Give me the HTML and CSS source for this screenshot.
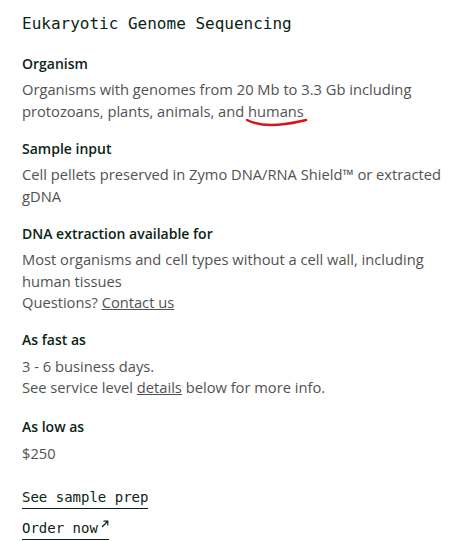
FILE: index.html
```html
<!DOCTYPE html>
<html>
<head>
<meta charset="utf-8">
<link rel="stylesheet" href="styles.css">
</head>
<body>
<div class="card">
  <h1 class="title">Eukaryotic Genome Sequencing</h1>
  <div class="section">
    <h2 class="label">Organism</h2>
    <p class="text">Organisms with genomes from 20 Mb to 3.3 Gb including protozoans, plants, animals, and <span class="mark">humans<svg class="scribble" width="64" height="12" viewBox="0 0 64 12"><path d="M2 3 C12 8 26 9 40 7 C50 6 56 4 61 3" fill="none" stroke="#d9141b" stroke-width="2.4" stroke-linecap="round"/></svg></span></p>
  </div>
  <div class="section">
    <h2 class="label">Sample input</h2>
    <p class="text">Cell pellets preserved in Zymo DNA/RNA Shield™ or extracted gDNA</p>
  </div>
  <div class="section">
    <h2 class="label">DNA extraction available for</h2>
    <p class="text">Most organisms and cell types without a cell wall, including human tissues<br>Questions? <a class="link" href="#">Contact us</a></p>
  </div>
  <div class="section">
    <h2 class="label">As fast as</h2>
    <p class="text">3 - 6 business days.<br>See service level <a class="link" href="#">details</a> below for more info.</p>
  </div>
  <div class="section section-price">
    <h2 class="label">As low as</h2>
    <p class="text">$250</p>
  </div>
  <div class="actions">
    <a class="action" href="#">See sample prep</a>
    <a class="action" href="#">Order now<svg class="arrow" width="8" height="8" viewBox="0 0 8 8"><path d="M1 7 L6.5 1.5 M2.5 1.2 H6.8 V5.5" fill="none" stroke="#0b2414" stroke-width="1.2"/></svg></a>
  </div>
</div>
</body>
</html>
```
FILE: styles.css
```css
html, body {
  margin: 0;
  padding: 0;
  background: #ffffff;
}
.card {
  padding: 13px 3px 0 22px;
  font-family: "Open Sans", sans-serif;
}
.title {
  margin: 0;
  font-family: "DejaVu Sans Mono", monospace;
  font-weight: normal;
  font-size: 16px;
  line-height: 22px;
  color: #0b2414;
}
.section {
  margin-top: 17px;
}
.title + .section {
  margin-top: 19px;
}
.section-price {
  margin-top: 19px;
}
.label {
  margin: 0;
  font-size: 14px;
  line-height: 20px;
  font-weight: 600;
  color: #0b2414;
}
.text {
  margin: 5.4px 0 0 0;
  font-size: 14.7px;
  line-height: 21.3px;
  color: #525252;
}
.link {
  color: #525252;
  text-decoration: underline;
}
.mark {
  position: relative;
}
.scribble {
  position: absolute;
  left: -3px;
  top: 16px;
}
.actions {
  margin-top: 24px;
  display: flex;
  flex-direction: column;
  align-items: flex-start;
  gap: 10px;
}
.action {
  font-family: "DejaVu Sans Mono", monospace;
  font-size: 14px;
  line-height: 18px;
  color: #0b2414;
  text-decoration: none;
  border-bottom: 1.5px solid #0b2414;
  padding-bottom: 2px;
}
.arrow {
  margin-left: 3px;
  vertical-align: 5px;
}
```
